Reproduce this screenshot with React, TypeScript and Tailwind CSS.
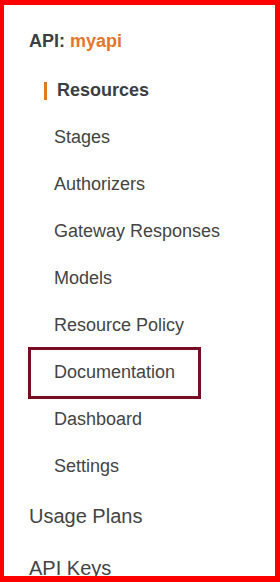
const apiItems = [
    "Resources",
    "Stages",
    "Authorizers",
    "Gateway Responses",
    "Models",
    "Resource Policy",
    "Documentation",
    "Dashboard",
    "Settings",
];

function NavItem({ label }: { label: string }) {
    if (label === "Resources") {
        return (
            <div className="flex h-[47px] items-center pl-[40px]">
                <span className="h-[18px] w-[3px] bg-[#e07b1c]" />
                <span className="ml-[10px] font-bold text-[#3b3f44]">{label}</span>
            </div>
        );
    }
    return (
        <div className="relative flex h-[47px] items-center pl-[50px]">
            <span>{label}</span>
            {label === "Documentation" && (
                // highlight box drawn over the item
                <div className="absolute left-[24px] top-[-2px] h-[52px] w-[173px] border-[3px] border-[#7b0b22]" />
            )}
        </div>
    );
}

export default function App() {
    return (
        <div
            className="h-[582px] w-[280px] overflow-hidden border-b-[6px] border-l-4 border-r-[5px] border-t-[5px] border-[#ff0000] bg-white text-[18px] text-[#444] antialiased"
            style={{ fontFamily: '"Liberation Sans", Arial, sans-serif' }}
        >
            <div className="pt-[13px]">
                <div className="flex h-[47px] items-center pl-[25px] font-bold text-[#3b3f44]">
                    API:&nbsp;<span className="text-[#e4772a]">myapi</span>
                </div>
                <div className="mt-[2px]">
                    {apiItems.map((item) => (
                        <NavItem key={item} label={item} />
                    ))}
                </div>
                <div className="text-[20px]">
                    <div className="flex h-[52px] items-center pl-[25px]">Usage Plans</div>
                    <div className="flex h-[52px] items-center pl-[25px]">API Keys</div>
                </div>
            </div>
        </div>
    );
}
